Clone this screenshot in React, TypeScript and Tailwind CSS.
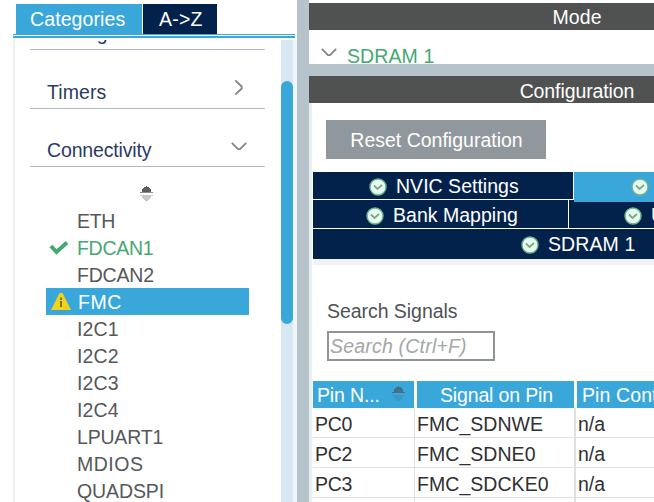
import clsx from 'clsx'

type PinState = 'ok' | 'warning'

interface Peripheral {
  name: string
  state?: PinState
  selected?: boolean
  spacing: string
}

const PERIPHERALS: Peripheral[] = [
  { name: 'ETH', spacing: 'tracking-[-0.3px]' },
  { name: 'FDCAN1', state: 'ok', spacing: 'tracking-[-0.3px]' },
  { name: 'FDCAN2', spacing: 'tracking-[-0.2px]' },
  { name: 'FMC', state: 'warning', selected: true, spacing: 'tracking-[0.5px] pl-px' },
  { name: 'I2C1', spacing: 'tracking-[0.1px]' },
  { name: 'I2C2', spacing: 'tracking-[0.1px]' },
  { name: 'I2C3', spacing: 'tracking-[0.1px]' },
  { name: 'I2C4', spacing: 'tracking-[0.1px]' },
  { name: 'LPUART1', spacing: 'tracking-[-0.2px]' },
  { name: 'MDIOS', spacing: 'tracking-[0.5px]' },
  { name: 'QUADSPI', spacing: 'tracking-[-0.1px]' },
]

const PINS = [
  { pin: 'PC0', signal: 'FMC_SDNWE', context: 'n/a' },
  { pin: 'PC2', signal: 'FMC_SDNE0', context: 'n/a' },
  { pin: 'PC3', signal: 'FMC_SDCKE0', context: 'n/a' },
]

function Chevron({ className }: { className?: string }) {
  return (
    <svg className={className} width="16" height="9" viewBox="0 0 16 9" fill="none" stroke="#828587" strokeWidth="1.8">
      <path d="M0.8 0.8 L7 7.2 H9 L15.2 0.8" />
    </svg>
  )
}

function SortIcon({ className, dim }: { className?: string; dim?: boolean }) {
  return (
    <svg className={className} width="13" height="16" viewBox="0 0 13 16" shapeRendering="crispEdges">
      <path d="M6 0 H7 V1 H9 V2 H10 V3 H11 V6 H2 V3 H3 V2 H4 V1 H6 Z" fill={dim ? '#456f87' : '#5c5f61'} />
      <path d="M0 6 H13 V7 H0 Z" fill={dim ? '#456f87' : '#8d9092'} />
      <path d="M0 9 H13 V10 H11 V12 H10 V13 H9 V14 H8 V15 H5 V14 H4 V13 H3 V12 H2 V10 H0 Z" fill={dim ? '#3b97c5' : '#c6c8c9'} />
    </svg>
  )
}

function CheckIcon() {
  return (
    <svg width="20" height="16" viewBox="0 0 20 16" fill="none" stroke="#45a873" strokeWidth="4">
      <path d="M2 6 L7.5 12 L18 2.5" />
    </svg>
  )
}

function WarningIcon() {
  return (
    <svg width="20" height="17" viewBox="0 0 20 17">
      <path d="M8.5 0 H11.5 L20 17 H0 Z" fill="#f3d21b" />
      <path d="M9 4.5 H11 V7 H9 Z M9 8 H11 V14 H9 Z" fill="#7d7424" />
    </svg>
  )
}

function BadgeCheck() {
  return (
    <svg className="shrink-0" width="18" height="18" viewBox="0 0 18 18" fill="none">
      <circle cx="9" cy="9" r="8" fill="#e4fbee" stroke="#6fb093" strokeWidth="1.4" />
      <path d="M5 7.5 L8.5 11 L13 7" stroke="#83a68a" strokeWidth="1.8" />
    </svg>
  )
}

function CategoryPanel() {
  return (
    <aside className="flex h-full w-[297px] shrink-0 flex-col bg-white pl-[13px] pt-1">
      <div className="flex h-[30px] gap-px pl-[3px] text-white">
        <div className="w-[126px] bg-[#3aa7db] pl-[14px] leading-[30px] tracking-[0.1px]">Categories</div>
        <div className="w-[74px] bg-[#03224b] pl-4 leading-[30px] tracking-[0.2px]">A-&gt;Z</div>
      </div>
      <div className="h-1 w-[282px] shrink-0 border-b-2 border-t border-[#3aa7db]" />
      <div className="flex min-h-0 flex-1 border-l-2 border-[#eeeff0]">
        <div className="flex w-[266px] flex-col overflow-hidden pl-[15px] pt-[2px]">
          <div className="flex h-[10px] w-[235px] shrink-0 items-end overflow-hidden border-b border-[#b2bac4] pb-[5px] pl-[17px]">
            <span className="leading-[22px] text-[#2c3a60]">Analog</span>
          </div>
          <div className="flex h-[59px] w-[235px] shrink-0 border-b border-[#b2bac4] pl-[17px] pt-[31px] leading-[22px] text-[#2c3a60]">
            <span className="tracking-[0.1px]">Timers</span>
            <Chevron className="ml-auto mr-[18px] mt-[2px] -rotate-90" />
          </div>
          <div className="flex h-[58px] w-[235px] shrink-0 border-b border-[#b2bac4] pl-[17px] pt-[30px] leading-[22px] text-[#2c3a60]">
            <span className="tracking-[-0.15px]">Connectivity</span>
            <Chevron className="ml-auto mr-[18px] mt-[3px]" />
          </div>
          <SortIcon className="ml-[110px] mt-[19px] shrink-0" />
          <ul className="mt-[5px] pl-4">
            {PERIPHERALS.map(p => (
              <li
                key={p.name}
                className={clsx('flex h-[27px] w-[203px] items-center', p.selected ? 'bg-[#3aa7db] text-white' : p.state === 'ok' ? 'text-[#45a873]' : 'text-[#55585b]')}
              >
                <span className="flex w-[31px] pl-[3px]">
                  {p.state === 'ok' && <CheckIcon />}
                  {p.state === 'warning' && <span className="pl-[2px]"><WarningIcon /></span>}
                </span>
                <span className={clsx('pt-[2px] leading-[27px]', p.spacing)}>{p.name}</span>
              </li>
            ))}
          </ul>
        </div>
        <div className="mt-[2px] w-3 bg-[#d8e8f3] pt-[41px]">
          <div className="h-[243px] rounded-full bg-[#3aa7db]" />
        </div>
        <div className="mt-[2px] flex-1 bg-[#eff5f9]" />
      </div>
    </aside>
  )
}

function TabLabel({ children, className }: { children: string; className?: string }) {
  return (
    <div className={clsx('flex items-center gap-[9px] whitespace-nowrap', className)}>
      <BadgeCheck />
      <span>{children}</span>
    </div>
  )
}

function ConfigTabs() {
  return (
    <div className="flex flex-col gap-px bg-white text-white">
      <div className="flex h-[27px]">
        <TabLabel className="w-[260px] bg-[#03224b] pl-[56px] pt-[3px] tracking-[0.02px]">NVIC Settings</TabLabel>
        <TabLabel className="relative z-10 ml-px h-[30px] w-[180px] bg-[#3aa7db] pb-[1px] pl-[57px]">User Constants</TabLabel>
      </div>
      <div className="flex h-[28px] gap-px">
        <TabLabel className="w-[255px] bg-[#03224b] pl-[53px] pt-[3px] tracking-[0.02px]">Bank Mapping</TabLabel>
        <TabLabel className="w-[180px] bg-[#03224b] pl-[55px] pt-[3px]">User Constants</TabLabel>
      </div>
      <TabLabel className="h-[30px] bg-[#03224b] pl-[208px] pt-px tracking-[0.1px]">SDRAM 1</TabLabel>
    </div>
  )
}

function PinTable() {
  return (
    <div className="w-[460px]">
      <div className="flex h-[27px] gap-[3px] whitespace-nowrap leading-[29px] text-white">
        <div className="flex w-[101px] bg-[#3aa7db] pl-[4px] tracking-[-0.15px]">
          Pin N...
          <SortIcon dim className="ml-auto mr-[9px] mt-[5px]" />
        </div>
        <div className="w-[157px] bg-[#3aa7db] pl-[23px] tracking-[-0.15px]">Signal on Pin</div>
        <div className="w-[196px] bg-[#3aa7db] pl-[5px] tracking-[0.1px]">Pin Context</div>
      </div>
      {PINS.map(row => (
        <div key={row.pin} className="flex h-[30px] border-b border-[#dde1e4] leading-[32px] text-[#2f3032]">
          <div className="w-[102px] border-r border-[#dde1e4] pl-[2px] tracking-[-0.3px]">{row.pin}</div>
          <div className="w-[161px] border-r-2 border-[#dde1e4] pl-[2px] tracking-[0.05px]">{row.signal}</div>
          <div className="pl-[2px]">{row.context}</div>
        </div>
      ))}
      <div className="flex h-[30px]">
        <div className="w-[102px] border-r border-[#dde1e4]" />
        <div className="w-[161px] border-r-2 border-[#dde1e4]" />
      </div>
    </div>
  )
}

export default function App() {
  return (
    <div className="flex h-[502px] w-[654px] overflow-hidden bg-white font-['Liberation_Sans',Arial,sans-serif] text-[19.5px]">
      <CategoryPanel />
      <div className="w-3 shrink-0 bg-[#b7c3ca]" />
      <main className="flex min-w-0 flex-1 flex-col overflow-hidden bg-white">
        <div className="mt-[3px] h-[27px] w-[536px] shrink-0 bg-[#505251] text-center leading-[29px] tracking-[0.1px] text-white">Mode</div>
        <section className="flex h-[34px] shrink-0 overflow-hidden pl-3 pt-[15px] leading-[22px] text-[#45a873]">
          <Chevron className="mt-[3px] shrink-0" />
          <span className="ml-[10px] tracking-[0.1px]">SDRAM 1</span>
        </section>
        <div className="h-3 w-[536px] shrink-0 bg-[#b7c3ca]" />
        <div className="h-[27px] w-[536px] shrink-0 bg-[#505251] text-center leading-[31px] tracking-[-0.1px] text-white">Configuration</div>
        <section className="flex min-h-0 w-[536px] flex-1 flex-col border-l-[3px] border-[#eaf1f4] pl-px">
          <button className="ml-[13px] mt-[17px] h-[39px] w-[220px] shrink-0 bg-[#91989d] pl-[1px] pt-px leading-[39px] tracking-[0px] text-white">
            Reset Configuration
          </button>
          <div className="mt-[13px] border-b-[6px] border-[#f1f2f5]">
            <ConfigTabs />
          </div>
          <label className="ml-[14px] mt-[35px] leading-[22px] tracking-[-0.05px] text-[#505257]">Search Signals</label>
          <input
            className="ml-[14px] mt-[9px] h-[30px] w-[168px] shrink-0 border-2 border-[#8f9494] pl-px italic tracking-[0.2px] placeholder:text-[#a4a7a8]"
            placeholder="Search (Ctrl+F)"
          />
          <div className="mt-5">
            <PinTable />
          </div>
        </section>
      </main>
    </div>
  )
}
